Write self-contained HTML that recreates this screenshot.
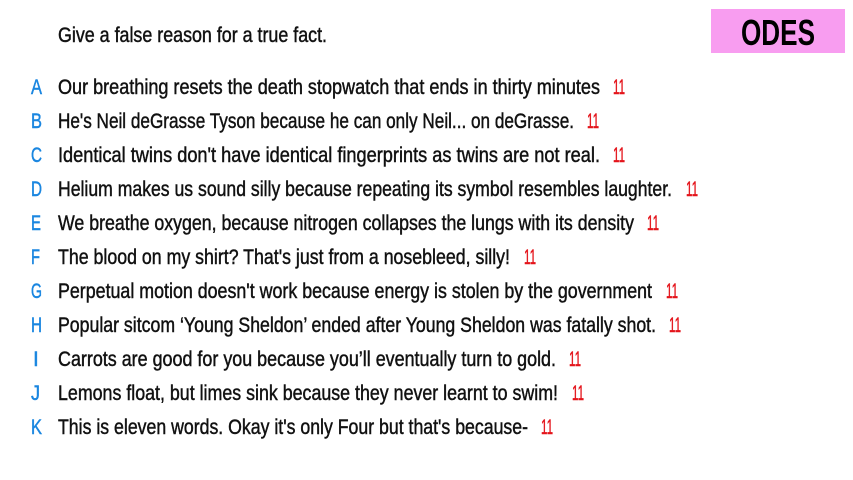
<!DOCTYPE html>
<html><head><meta charset="utf-8"><style>
html,body{margin:0;padding:0;background:#fff;width:853px;height:480px;overflow:hidden}
svg{display:block}
text{font-family:"Liberation Sans Narrow","Liberation Sans",sans-serif;font-size:21px;stroke-width:0.45px}
.l{fill:#1a86e0;stroke:#1a86e0}.t{fill:#111;stroke:#111}.n{fill:#e4141b;stroke:#e4141b}
</style></head><body>
<svg width="853" height="480" viewBox="0 0 853 480">
<rect x="711" y="9" width="134" height="44" fill="#f89df0"/>
<text x="778" y="45" text-anchor="middle" style="font-size:36px;font-weight:bold" fill="#000" textLength="74" lengthAdjust="spacingAndGlyphs">ODES</text>
<text class="t" x="58" y="42" textLength="269" lengthAdjust="spacingAndGlyphs">Give a false reason for a true fact.</text>
<g>
<text class="l" x="31" y="94" textLength="11" lengthAdjust="spacingAndGlyphs">A</text><text class="t" x="58" y="94" textLength="542" lengthAdjust="spacingAndGlyphs">Our breathing resets the death stopwatch that ends in thirty minutes</text><text class="n" x="613" y="94" textLength="12" lengthAdjust="spacingAndGlyphs">11</text>
<text class="l" x="31" y="128" textLength="11" lengthAdjust="spacingAndGlyphs">B</text><text class="t" x="58" y="128" textLength="516" lengthAdjust="spacingAndGlyphs">He's Neil deGrasse Tyson because he can only Neil... on deGrasse.</text><text class="n" x="587" y="128" textLength="12" lengthAdjust="spacingAndGlyphs">11</text>
<text class="l" x="31" y="162" textLength="11" lengthAdjust="spacingAndGlyphs">C</text><text class="t" x="58" y="162" textLength="542" lengthAdjust="spacingAndGlyphs">Identical twins don't have identical fingerprints as twins are not real.</text><text class="n" x="613" y="162" textLength="12" lengthAdjust="spacingAndGlyphs">11</text>
<text class="l" x="31" y="196" textLength="11" lengthAdjust="spacingAndGlyphs">D</text><text class="t" x="58" y="196" textLength="614" lengthAdjust="spacingAndGlyphs">Helium makes us sound silly because repeating its symbol resembles laughter.</text><text class="n" x="686" y="196" textLength="12" lengthAdjust="spacingAndGlyphs">11</text>
<text class="l" x="31" y="230" textLength="10" lengthAdjust="spacingAndGlyphs">E</text><text class="t" x="58" y="230" textLength="576" lengthAdjust="spacingAndGlyphs">We breathe oxygen, because nitrogen collapses the lungs with its density</text><text class="n" x="647" y="230" textLength="12" lengthAdjust="spacingAndGlyphs">11</text>
<text class="l" x="31" y="264" textLength="9" lengthAdjust="spacingAndGlyphs">F</text><text class="t" x="58" y="264" textLength="452" lengthAdjust="spacingAndGlyphs">The blood on my shirt? That's just from a nosebleed, silly!</text><text class="n" x="524" y="264" textLength="12" lengthAdjust="spacingAndGlyphs">11</text>
<text class="l" x="31" y="298" textLength="11" lengthAdjust="spacingAndGlyphs">G</text><text class="t" x="58" y="298" textLength="594" lengthAdjust="spacingAndGlyphs">Perpetual motion doesn't work because energy is stolen by the government</text><text class="n" x="666" y="298" textLength="12" lengthAdjust="spacingAndGlyphs">11</text>
<text class="l" x="31" y="332" textLength="11" lengthAdjust="spacingAndGlyphs">H</text><text class="t" x="58" y="332" textLength="598" lengthAdjust="spacingAndGlyphs">Popular sitcom ‘Young Sheldon’ ended after Young Sheldon was fatally shot.</text><text class="n" x="669" y="332" textLength="12" lengthAdjust="spacingAndGlyphs">11</text>
<text class="l" x="33" y="366">I</text><text class="t" x="58" y="366" textLength="498" lengthAdjust="spacingAndGlyphs">Carrots are good for you because you’ll eventually turn to gold.</text><text class="n" x="569" y="366" textLength="12" lengthAdjust="spacingAndGlyphs">11</text>
<text class="l" x="31" y="400" textLength="9" lengthAdjust="spacingAndGlyphs">J</text><text class="t" x="58" y="400" textLength="500" lengthAdjust="spacingAndGlyphs">Lemons float, but limes sink because they never learnt to swim!</text><text class="n" x="572" y="400" textLength="12" lengthAdjust="spacingAndGlyphs">11</text>
<text class="l" x="31" y="434" textLength="11" lengthAdjust="spacingAndGlyphs">K</text><text class="t" x="58" y="434" textLength="470" lengthAdjust="spacingAndGlyphs">This is eleven words. Okay it's only Four but that's because-</text><text class="n" x="541" y="434" textLength="12" lengthAdjust="spacingAndGlyphs">11</text>
</g>
</svg>
</body></html>
